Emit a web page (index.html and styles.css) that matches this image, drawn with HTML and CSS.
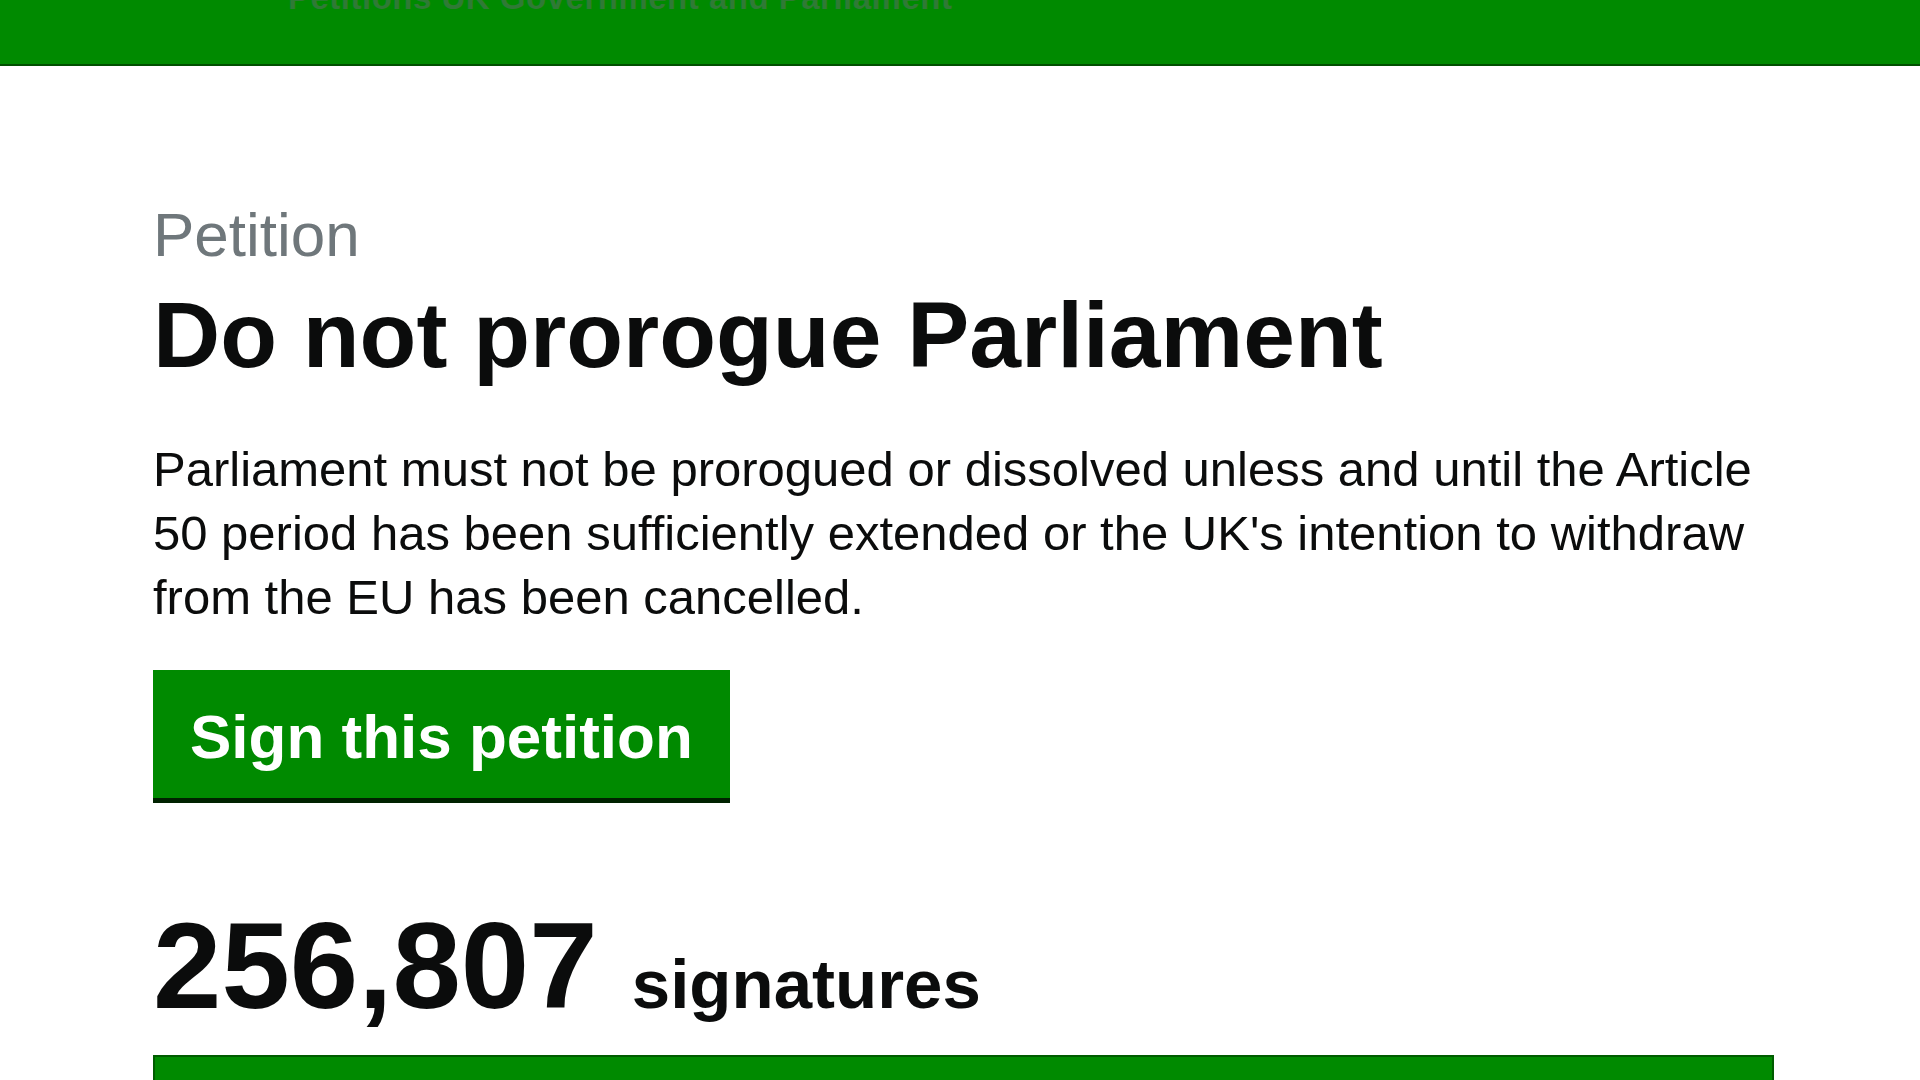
FILE: index.html
```html
<!DOCTYPE html>
<html lang="en">
<head>
<meta charset="utf-8">
<title>Do not prorogue Parliament - Petitions</title>
<link rel="stylesheet" href="styles.css">
</head>
<body>
<header class="site-header">
  <div class="header-inner">
    <span class="header-title">Petitions UK Government and Parliament</span>
  </div>
</header>
<main class="page">
  <div class="caption">Petition</div>
  <h1 class="heading">Do not prorogue Parliament</h1>
  <p class="summary">Parliament must not be prorogued or dissolved unless and until the Article 50 period has been sufficiently extended or the UK's intention to withdraw from the EU has been cancelled.</p>
  <a class="sign-button" href="#">Sign this petition</a>
  <div class="count"><span class="count-number">256,807</span> <span class="count-label">signatures</span></div>
  <div class="progress"><div class="progress-fill"></div></div>
</main>
</body>
</html>
```

FILE: styles.css
```css
html, body {
  margin: 0;
  padding: 0;
  background: #ffffff;
}
body {
  font-family: "Liberation Sans", Arial, sans-serif;
  color: #0b0c0c;
  overflow: hidden;
  height: 1080px;
}
.site-header {
  background: #008a00;
  height: 64px;
  border-bottom: 2px solid #004f00;
  overflow: hidden;
}
.header-inner {
  padding-left: 288px;
  margin-top: -20px;
}
.header-title {
  font-size: 33px;
  line-height: 36px;
  font-weight: bold;
  color: #2f7a35;
  letter-spacing: 0.5px;
}
.page {
  padding: 133px 0 0 153px;
  width: 1621px;
}
.caption {
  font-size: 62px;
  line-height: 72px;
  color: #6f777b;
}
.heading {
  margin: 12px 0 0 0;
  font-size: 93px;
  line-height: 104px;
  font-weight: bold;
}
.summary {
  margin: 50px 0 0 0;
  font-size: 49px;
  line-height: 64px;
}
.sign-button {
  display: inline-block;
  margin-top: 41px;
  background: #008a00;
  color: #ffffff;
  text-decoration: none;
  font-size: 62px;
  line-height: 72px;
  font-weight: bold;
  padding: 31px 37px 25px 37px;
  box-shadow: 0 5px 0 #002200;
}
.count {
  margin-top: 98px;
  font-size: 123px;
  line-height: 140px;
  font-weight: bold;
  white-space: nowrap;
}
.count-label {
  font-size: 69px;
  line-height: 1;
}
.progress {
  margin-top: 19px;
  height: 80px;
  border: 2px solid #005c00;
  background: #e5e5e5;
  box-sizing: border-box;
}
.progress-fill {
  height: 100%;
  width: 100%;
  background: #008a00;
}
```
